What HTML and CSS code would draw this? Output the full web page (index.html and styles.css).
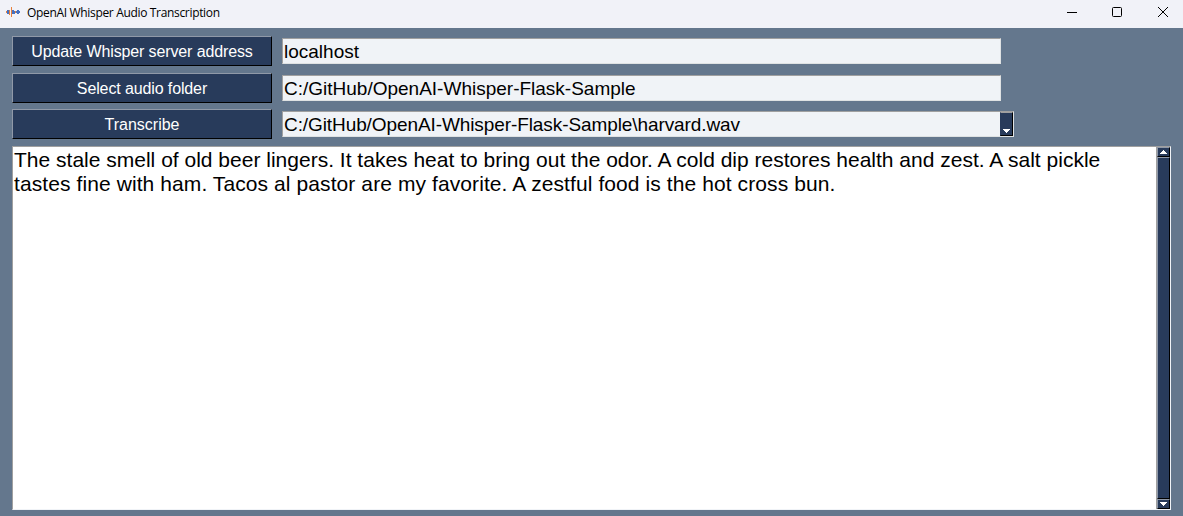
FILE: index.html
```html
<!DOCTYPE html>
<html lang="en">
<head>
<meta charset="utf-8">
<title>OpenAI Whisper Audio Transcription</title>
<link rel="stylesheet" href="styles.css">
</head>
<body>
<header class="titlebar">
  <svg class="app-icon" width="14" height="13" viewBox="0 0 14 13" shape-rendering="crispEdges">
    <path fill="#e8803c" d="M0 5h1v2H0zM3 4h1v5H3zM5 1h1v10H5zM9 5h1v2H9z"/>
    <path fill="#4472c4" d="M1 4h2v4H1zM6 4h2v4H6zM8 5h1v3H8zM11 4h2v4h-2zM10 5h1v2h-1zM13 5h1v2h-1z"/>
  </svg>
  <h1 class="title">OpenAI Whisper Audio Transcription</h1>
  <svg class="window-controls" width="104" height="13" viewBox="0 0 104 13" fill="none" stroke="#000">
    <path d="M0 6.5h10"/>
    <rect x="45.5" y="1.5" width="9" height="9" rx="1"/>
    <path d="M91 1l10 10M101 1L91 11"/>
  </svg>
</header>
<main class="content">
  <div class="row">
    <button class="button button-long">Update Whisper server address</button>
    <div class="field">localhost</div>
  </div>
  <div class="row">
    <button class="button button-long">Select audio folder</button>
    <div class="field">C:/GitHub/OpenAI-Whisper-Flask-Sample</div>
  </div>
  <div class="row">
    <button class="button">Transcribe</button>
    <div class="field combo">
      <span class="combo-text">C:/GitHub/OpenAI-Whisper-Flask-Sample\harvard.wav</span>
      <span class="combo-arrow"><svg width="7" height="4" viewBox="0 0 7 4" shape-rendering="crispEdges"><path fill="#fff" d="M0 0h7v1H6v1H5v1H4v1H3V3H2V2H1V1H0z"/></svg></span>
    </div>
  </div>
  <div class="output">
    <p class="transcript"><span class="line">The stale smell of old beer lingers. It takes heat to bring out the odor. A cold dip restores health and zest. A salt pickle</span> <span class="line line-loose">tastes fine with ham. Tacos al pastor are my favorite. A zestful food is the hot cross bun.</span></p>
    <div class="scrollbar">
      <span class="scroll-arrow"><svg width="7" height="4" viewBox="0 0 7 4" shape-rendering="crispEdges"><path fill="#fff" d="M3 0h1v1h1v1h1v1h1v1H0V3h1V2h1V1h1z"/></svg></span>
      <span class="scroll-thumb"></span>
      <span class="scroll-arrow"><svg width="7" height="4" viewBox="0 0 7 4" shape-rendering="crispEdges"><path fill="#fff" d="M0 0h7v1H6v1H5v1H4v1H3V3H2V2H1V1H0z"/></svg></span>
    </div>
  </div>
</main>
</body>
</html>
```
FILE: styles.css
```css
* { box-sizing: border-box; }
body {
  margin: 0;
  height: 516px;
  display: flex;
  flex-direction: column;
  overflow: hidden;
  background: #64778d;
  font-family: "Liberation Sans", Arial, sans-serif;
}
.titlebar {
  height: 28px;
  flex: none;
  display: flex;
  align-items: center;
  padding: 0 12px 3px 6px;
  background: #f1f2f8;
}
.title {
  margin: 0 auto 0 7px;
  font: 400 12px/18px "Open Sans", "Noto Sans", sans-serif;
  letter-spacing: -0.33px;
  color: #000;
}
.content {
  flex: 1;
  display: flex;
  flex-direction: column;
  padding: 8px 12px 6px;
}
.row {
  display: flex;
  align-items: center;
  gap: 10px;
  height: 30px;
  margin-bottom: 7px;
}
.row:nth-child(2) { margin-bottom: 6px; }
.button {
  width: 260px;
  height: 30px;
  padding: 2px 0 0;
  border: 1px solid;
  border-color: #9099a8 #000 #000 #9099a8;
  background: #283b5b;
  color: #fff;
  font: 16px/26px "Liberation Sans", Arial, sans-serif;
}
.button-long { letter-spacing: -0.12px; }
.field {
  width: 719px;
  height: 26px;
  padding-left: 1px;
  border: 1px solid;
  border-color: #a0a0a0 #dfe2e3 #dfe2e3 #a0a0a0;
  background: #f0f3f7;
  color: #000;
  font-size: 19px;
  line-height: 26px;
  white-space: nowrap;
}
.combo { width: 732px; display: flex; }
.combo-text { flex: 1; letter-spacing: -0.09px; }
.combo-arrow {
  width: 13px;
  display: flex;
  justify-content: center;
  align-items: flex-end;
  padding-bottom: 2px;
  border: 1px solid;
  border-color: #a0a0a0 #000 #000 #283b5b;
  background: #283b5b;
}
.output {
  flex: 1;
  display: flex;
  border: 1px solid;
  border-color: #a0a0a0 #f0f3f7 #f0f3f7 #a0a0a0;
  background: #fff;
}
.transcript {
  flex: 1;
  margin: 0;
  padding: 1px 0 0 1px;
  font-size: 21px;
  line-height: 24px;
  white-space: nowrap;
  color: #000;
}
.line { display: block; letter-spacing: 0.005px; }
.line-loose { letter-spacing: 0.09px; }
.scrollbar {
  width: 14px;
  display: flex;
  flex-direction: column;
  border-left: 1px solid #a0a0a0;
}
.scroll-arrow, .scroll-thumb {
  border: 1px solid;
  border-color: #9099a8 #000 #000 #9099a8;
  background: #283b5b;
}
.scroll-arrow {
  height: 10px;
  display: flex;
  align-items: center;
  justify-content: center;
}
.scroll-thumb { flex: 1; }
```
